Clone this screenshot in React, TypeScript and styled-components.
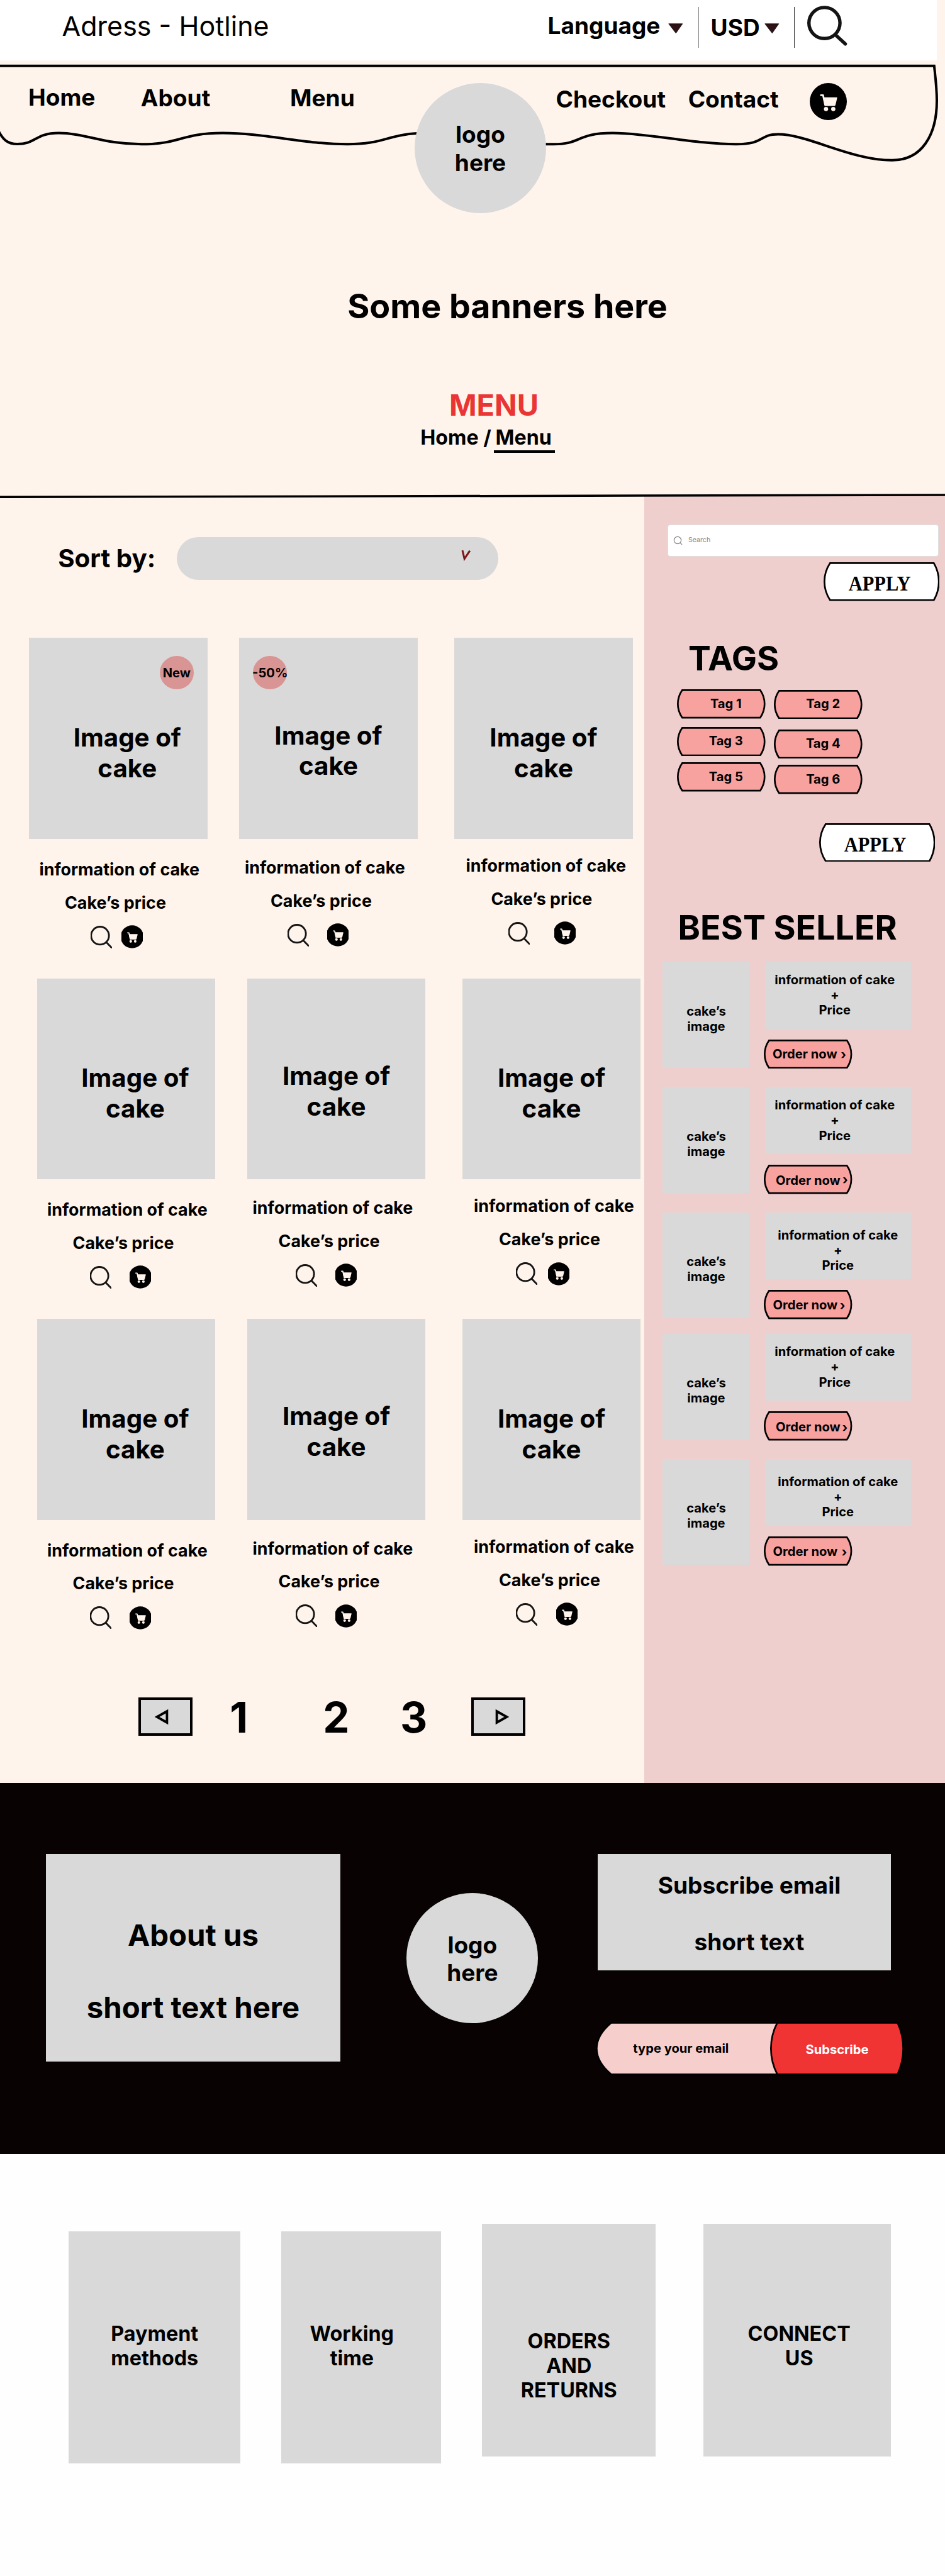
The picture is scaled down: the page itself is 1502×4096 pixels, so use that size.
import React from "react";
import styled, { createGlobalStyle } from "styled-components";

const GlobalStyle = createGlobalStyle`
  *, *::before, *::after { box-sizing: border-box; }
  body { margin: 0; background: #fff; }
  button, input { font: inherit; border: 0; padding: 0; background: none; color: inherit; }
`;

const GREY = "#d9d9d9";
const CREAM = "#fff4eb";
const SERIF = `"Liberation Serif", "Times New Roman", serif`;

const Page = styled.div`
  width: 1502px;
  height: 4096px;
  overflow: hidden;
  background: ${CREAM};
  color: #000;
  font-family: Inter, "Liberation Sans", sans-serif;
  font-weight: 700;
  line-height: 1.21;
  white-space: nowrap;
`;

/* ---------- icons ---------- */

const Svg = styled.svg<{ $top?: number }>`
  display: block;
  flex: none;
  margin-top: ${(p) => p.$top ?? 0}px;
`;

const SearchLarge = () => (
  <Svg width="64" height="64" viewBox="0 0 64 64" $top={9} fill="none" stroke="#141414">
    <circle cx="27.4" cy="27.6" r="24.7" strokeWidth="5.4" />
    <path d="M45 46.5 60.5 60.8" strokeWidth="5.4" strokeLinecap="round" />
  </Svg>
);

const SearchSmall = () => (
  <Svg width="34" height="36" viewBox="0 0 34 36" fill="none" stroke="#141414" strokeWidth="2.8">
    <circle cx="15" cy="15.7" r="14.2" />
    <path d="M25 26.2 35 36.6" />
  </Svg>
);

const CartGlyph = () => (
  <g fill="#fff4eb">
    <path
      d="M17.8 19.4H21.2L24.6 35"
      fill="none"
      stroke="#fff4eb"
      strokeWidth="2.8"
      strokeLinecap="round"
      strokeLinejoin="round"
    />
    <path d="M20.8 22.8H43q.8 0 .6.9L41 34.8q-.4 1.8-1.8 1.8H24z" />
    <circle cx="25.9" cy="41.3" r="3.4" />
    <circle cx="37.4" cy="41.3" r="3.4" />
  </g>
);

const CartLarge = () => (
  <Svg width="59" height="59" viewBox="0 0 59 59" $top={35.5}>
    <circle cx="29.5" cy="29.5" r="29.5" />
    <CartGlyph />
  </Svg>
);

const CartSmall = () => (
  <Svg width="34" height="37" viewBox="2 0 55 59">
    <circle cx="29.5" cy="29.5" r="29.5" />
    <CartGlyph />
  </Svg>
);

const Caret = () => (
  <Svg width="24" height="17" viewBox="0 0 24 17" $top={37}>
    <path d="M.8.8H22.8L12.3 15.8z" fill="#2e1215" stroke="#100406" strokeWidth=".8" />
  </Svg>
);

/* ---------- barrel-shaped outline shared by the tags and buttons ---------- */

const ShapeSvg = styled.svg`
  position: absolute;
  inset: 0;
`;

type BarrelProps = {
  w: number;
  h: number;
  left: number;
  right: number;
  fill: string;
};

const Barrel = ({ w, h, left, right, fill }: BarrelProps) => {
  const s = 1.35;
  const ctrl = (inset: number) => (s - 0.25 * (inset + s)) / 0.75;
  const l = left + s;
  const r = w - right - s;
  const cl = ctrl(left);
  const cr = w - ctrl(right);
  const y1 = h * 0.32;
  const y2 = h * 0.68;
  const d = `M${l} ${s}H${r}C${cr} ${y1} ${cr} ${y2} ${r} ${h - s}H${l}C${cl} ${y2} ${cl} ${y1} ${l} ${s}Z`;
  return (
    <ShapeSvg width={w} height={h} viewBox={`0 0 ${w} ${h}`}>
      <path d={d} fill={fill} stroke="#000" strokeWidth="2.7" />
    </ShapeSvg>
  );
};

const BarrelLabel = styled.span`
  position: relative;
`;

/* ---------- header ---------- */

const TopBar = styled.div`
  display: grid;
  grid-template-columns: 772px 191.5px 47.5px 20px 85px 47.5px 20.5px auto;
  align-items: start;
  width: 1489px;
  height: 96px;
  padding-left: 98.6px;
  background: #fff;
`;

const Address = styled.span`
  margin-top: 15.3px;
  font-size: 43px;
  font-weight: 400;
`;

const BarLabel = styled.span<{ $top: number }>`
  margin-top: ${(p) => p.$top}px;
  font-size: 37px;
`;

const Separator = styled.i<{ $color: string }>`
  width: 1px;
  height: 65px;
  margin-top: 11px;
  background: ${(p) => p.$color};
`;

const Header = styled.header`
  position: relative;
  height: 692px;
`;

const NavOutline = styled.svg`
  position: absolute;
  top: 0;
  left: 0;
`;

const Nav = styled.nav`
  position: relative;
  display: grid;
  grid-template-columns: 178.8px 237.2px 198px 224.5px 210.2px 192.9px auto;
  align-items: start;
  height: 243px;
  padding-left: 45px;
`;

const NavLink = styled.a<{ $top: number }>`
  margin-top: ${(p) => p.$top}px;
  font-size: 37.1px;
`;

const Logo = styled.div<{ $top: number }>`
  width: 209px;
  height: 207px;
  margin-top: ${(p) => p.$top}px;
  padding-top: 60.6px;
  border-radius: 50%;
  background: ${GREY};
  font-size: 37px;
  text-align: center;
  white-space: pre-line;
`;

const BannerTitle = styled.h1`
  margin: 0;
  padding: 115.7px 0 0 111px;
  font-size: 53.7px;
  text-align: center;
`;

const PageTitle = styled.h2`
  margin: 0;
  padding: 96.2px 0 0 68px;
  color: #ea3535;
  font-size: 46.9px;
  text-align: center;
`;

const Breadcrumb = styled.div`
  display: flex;
  margin-top: 4.4px;
  padding-left: 668.3px;
  font-size: 32.2px;
`;

const CrumbHome = styled.span`
  width: 116.4px;
`;

const CrumbCurrent = styled.span`
  width: 97px;
  padding-left: 2.9px;
  border-bottom: 4px solid #000;
`;

/* ---------- catalogue ---------- */

const Main = styled.main`
  position: relative;
  display: grid;
  grid-template-columns: 1024px 478px;
  height: 2047px;
`;

const SectionRule = styled.svg`
  position: absolute;
  top: -4px;
  left: 0;
`;

const Catalogue = styled.section`
  padding-top: 66.2px;
`;

const SortRow = styled.div`
  display: flex;
  align-items: center;
  padding-left: 92.2px;
  font-size: 40.3px;
`;

const SortLabel = styled.span`
  width: 188.8px;
  padding-top: 1.6px;
`;

const SortSelect = styled.div`
  display: flex;
  justify-content: flex-end;
  width: 511px;
  height: 67.6px;
  padding: 20px 43px 0 0;
  border-radius: 34px;
  background: ${GREY};
`;

const ProductRow = styled.div<{ $left: number }>`
  display: grid;
  grid-template-columns: 334px 342px 284px;
  height: 541.4px;
  padding-left: ${(p) => p.$left}px;
`;

const ProductGrid = styled.div`
  padding-top: 92.6px;
`;

const Product = styled.article`
  width: 283.6px;
`;

const ProductImage = styled.div<{ $top: number; $shift: number }>`
  position: relative;
  height: 319.6px;
  padding: ${(p) => p.$top}px 0 0 ${(p) => p.$shift}px;
  background: ${GREY};
  font-size: 40.3px;
  text-align: center;
  white-space: pre-line;
`;

const Badge = styled.span<{ $left: number }>`
  position: absolute;
  top: 28.6px;
  left: ${(p) => p.$left}px;
  width: 54px;
  height: 53.5px;
  border-radius: 50%;
  background: #d99593;
  font-size: 20.15px;
  line-height: 54px;
  display: flex;
  justify-content: center;
`;

const ProductInfo = styled.p<{ $top: number; $left: number }>`
  margin: ${(p) => p.$top}px 0 0 ${(p) => p.$left}px;
  font-size: 26.87px;
`;

const Actions = styled.div<{ $left: number; $gap: number }>`
  display: flex;
  gap: ${(p) => p.$gap}px;
  margin-top: 20px;
  padding-left: ${(p) => p.$left}px;
`;

const IconButton = styled.button`
  display: block;
`;

const Pagination = styled.nav`
  display: grid;
  grid-template-columns: 145.3px 148px 122.7px 113.2px auto;
  align-items: start;
  padding: 51.5px 0 0 219.9px;
`;

const PageNumber = styled.a`
  font-size: 67.2px;
`;

const PageStep = styled.button<{ $pad: number }>`
  width: 86px;
  height: 61px;
  margin-top: 9px;
  padding-left: ${(p) => p.$pad}px;
  border: 4px solid #000;
  background: ${GREY};
`;

/* ---------- sidebar ---------- */

const Sidebar = styled.aside`
  padding: 46.2px 0 0 37px;
  background: #eecfce;
`;

const SearchBox = styled.label`
  display: flex;
  align-items: center;
  gap: 9px;
  width: 430.6px;
  height: 51px;
  padding-left: 8px;
  border: 1px solid #e0e0e0;
  border-radius: 4px;
  background: #fff;
  color: #828282;
  font-size: 10.6px;
  font-weight: 400;
`;

const ApplyButton = styled.button<{ $top: number; $left: number }>`
  position: relative;
  display: block;
  width: 184.6px;
  height: 61.6px;
  margin: ${(p) => p.$top}px 0 0 ${(p) => p.$left}px;
  padding: 6px 6px 0 0;
  font-family: ${SERIF};
  font-size: 34px;
  font-weight: 700;
  line-height: 1;
`;

const ApplyLabel = styled.span`
  position: relative;
  display: inline-block;
  transform: scaleX(0.895);
`;

const SideTitle = styled.h3<{ $top: number; $left: number }>`
  margin: ${(p) => p.$top}px 0 0 ${(p) => p.$left}px;
  font-size: 53.7px;
`;

const Tags = styled.div`
  display: flex;
  gap: 13.9px;
  height: 167px;
  margin: 16.6px 0 0 15px;
`;

const TagColumn = styled.div<{ $top: number; $gap: number }>`
  padding-top: ${(p) => p.$top}px;
  & > :nth-child(2) {
    margin: ${(p) => p.$gap}px 0 10px;
  }
`;

const Tag = styled.button`
  position: relative;
  display: block;
  width: 140.6px;
  height: 46.5px;
  padding: 0 0 1px 15px;
  font-size: 20.15px;
`;

const Seller = styled.article<{ $height: number }>`
  display: grid;
  grid-template-columns: 161.3px auto;
  height: ${(p) => p.$height}px;
  margin-left: -8px;
  font-size: 20.15px;
`;

const SellerList = styled.div`
  padding-top: 20.8px;
`;

const SellerImage = styled.div`
  width: 138px;
  height: 168.4px;
  padding: 66.4px 0 0 1px;
  background: ${GREY};
  text-align: center;
  white-space: pre-line;
`;

const SellerInfo = styled.div<{ $top: number; $shift: number }>`
  width: 233.3px;
  height: 106.7px;
  margin-left: 1.4px;
  padding: ${(p) => p.$top}px ${(p) => p.$shift}px 0 0;
  background: ${GREY};
  text-align: center;
  white-space: pre-line;
`;

const OrderButton = styled.button<{ $top: number; $left: number }>`
  position: relative;
  display: flex;
  align-items: flex-start;
  width: 140.4px;
  height: 46.4px;
  margin-top: 17.2px;
  padding: ${(p) => p.$top}px 0 0 ${(p) => p.$left}px;
`;

const Chevron = styled.span<{ $left: number; $top: number }>`
  position: relative;
  margin: ${(p) => p.$top}px 0 0 ${(p) => p.$left}px;
`;

/* ---------- footer ---------- */

const Footer = styled.footer`
  display: flex;
  align-items: flex-start;
  height: 590px;
  padding: 112.6px 0 0 72.8px;
  background: #080202;
`;

const AboutBox = styled.div`
  width: 468.4px;
  height: 330.7px;
  margin-right: 105.1px;
  padding-top: 100.8px;
  background: ${GREY};
  font-size: 47.3px;
  text-align: center;
  white-space: pre-line;
`;

const Newsletter = styled.div`
  margin-left: 94.9px;
`;

const NewsletterBox = styled.div`
  width: 465.6px;
  height: 185.8px;
  padding: 28.2px 0 0 16px;
  background: ${GREY};
  font-size: 37.1px;
  text-align: center;
  white-space: pre-line;
`;

const EmailForm = styled.div`
  display: flex;
  height: 84.6px;
  margin: 82px 0 0 -3.2px;
  font-size: 20.15px;
`;

const EmailField = styled.div`
  position: relative;
  width: 277px;
  padding: 29.9px 0 0 59.3px;
`;

const SubscribeButton = styled.button`
  position: relative;
  width: 213px;
  padding-top: 2px;
  color: #fff;
`;

const Links = styled.section`
  display: flex;
  align-items: flex-start;
  height: 671px;
  padding-left: 109.2px;
  background: #fefefe;
`;

const LinkBox = styled.div<{ $x: number; $y: number; $w: number; $pad: string }>`
  width: ${(p) => p.$w}px;
  height: 369.4px;
  margin: ${(p) => p.$y}px 0 0 ${(p) => p.$x}px;
  padding: ${(p) => p.$pad};
  background: ${GREY};
  font-size: 32.3px;
  text-align: center;
  white-space: pre-line;
`;

/* ---------- data ---------- */

type Item = {
  label?: string;
  badgeLeft?: number;
  col: 0 | 1 | 2;
  search: number;
  gap: number;
};

const columns = [
  { imgTop: 134.6, shift: 28.6, info: 16.2, infoTop: 31.8, price: 56.8 },
  { imgTop: 131.2, shift: 0, info: 8.8, infoTop: 28.8, price: 49.8 },
  { imgTop: 134.6, shift: 0, info: 18.2, infoTop: 26, price: 58.2 },
];

const rows: { left: number; items: Item[] }[] = [
  {
    left: 46.2,
    items: [
      { label: "New", badgeLeft: 207.6, col: 0, search: 98.3, gap: 15 },
      { label: "-50%", badgeLeft: 22, col: 1, search: 76.5, gap: 29.8 },
      { col: 2, search: 85.6, gap: 39 },
    ],
  },
  {
    left: 58.8,
    items: [
      { col: 0, search: 84.2, gap: 29.5 },
      { col: 1, search: 76.8, gap: 29.5 },
      { col: 2, search: 85.6, gap: 16.8 },
    ],
  },
  {
    left: 58.8,
    items: [
      { col: 0, search: 84.2, gap: 29.5 },
      { col: 1, search: 76.8, gap: 29.5 },
      { col: 2, search: 85.6, gap: 29.5 },
    ],
  },
];

const sellers = [
  { height: 199.2, top: 16.4, shift: 11.2, x: 13.6, y: 10.6, cx: 5.6, cy: 1.8 },
  { height: 199.2, top: 16.4, shift: 11.2, x: 18.7, y: 13, cx: 3.4, cy: -1.6 },
  { height: 192.8, top: 24, shift: 1.2, x: 14.3, y: 11.8, cx: 3.6, cy: 0.8 },
  { height: 199.2, top: 16.4, shift: 11.2, x: 18.7, y: 13, cx: 2.8, cy: 0.5 },
  { height: 168.4, top: 24, shift: 1.2, x: 14.3, y: 11.8, cx: 6.2, cy: 1 },
];

const TagButton = ({ name }: { name: string }) => (
  <Tag>
    <Barrel w={140.6} h={46.5} left={7} right={7} fill="#f8a2a0" />
    <BarrelLabel>{name}</BarrelLabel>
  </Tag>
);

const Apply = ({ top, left }: { top: number; left: number }) => (
  <ApplyButton $top={top} $left={left}>
    <Barrel w={184.6} h={61.6} left={9} right={8} fill="#fff" />
    <ApplyLabel>APPLY</ApplyLabel>
  </ApplyButton>
);

export default function App() {
  return (
    <Page>
      <GlobalStyle />
      <TopBar>
        <Address>Adress - Hotline</Address>
        <BarLabel $top={18.7}>Language</BarLabel>
        <Caret />
        <Separator $color="#808080" />
        <BarLabel $top={22.1}>USD</BarLabel>
        <Caret />
        <Separator $color="#333" />
        <SearchLarge />
      </TopBar>

      <Header>
        <NavOutline width="1502" height="180" viewBox="0 96 1502 180" fill="none" stroke="#000" strokeWidth="4">
          <path d="M-4 104.8H1484.8C1487 125 1489 140 1489 160C1489 215 1465 254.8 1418 254.8C1352 254.8 1284 213.5 1237 213.5C1205 213.5 1217 229.3 1170 229.3C1105 229.3 1030 211.6 973.7 211.6C915 211.6 925 229.3 880 229.3L868 229.3C790 229.3 730 211.6 680 211.6C615 211.6 615 229.3 552 229.3C485 229.3 420 211.6 354 211.6C287 211.6 287 229.3 225 229.3C165 229.3 135 211.6 93.4 211.6C55 211.6 58 229 27.3 229C12 229 5 222 -2 209" />
        </NavOutline>
        <Nav>
          <NavLink $top={37}>Home</NavLink>
          <NavLink $top={38.4}>About</NavLink>
          <NavLink $top={38.4}>Menu</NavLink>
          <Logo $top={35.5}>{"logo\nhere"}</Logo>
          <NavLink $top={39.6}>Checkout</NavLink>
          <NavLink $top={39.6}>Contact</NavLink>
          <CartLarge />
        </Nav>
        <BannerTitle>Some banners here</BannerTitle>
        <PageTitle>MENU</PageTitle>
        <Breadcrumb>
          <CrumbHome>Home /</CrumbHome>
          <CrumbCurrent>Menu</CrumbCurrent>
        </Breadcrumb>
      </Header>

      <Main>
        <Catalogue>
          <SortRow>
            <SortLabel>Sort by:</SortLabel>
            <SortSelect>
              <Svg width="16" height="20" viewBox="0 0 16 20" fill="none" stroke="#7d1416" strokeWidth="3">
                <path d="M2 1.2 5.2 14.5 13.8 1.6" />
              </Svg>
            </SortSelect>
          </SortRow>

          <ProductGrid>
            {rows.map((row, r) => (
              <ProductRow key={r} $left={row.left}>
                {row.items.map((item) => {
                  const c = columns[item.col];
                  return (
                    <Product key={item.col}>
                      <ProductImage $top={c.imgTop} $shift={c.shift}>
                        {item.label && <Badge $left={item.badgeLeft ?? 0}>{item.label}</Badge>}
                        {"Image of\ncake"}
                      </ProductImage>
                      <ProductInfo $top={c.infoTop} $left={c.info}>
                        information of cake
                      </ProductInfo>
                      <ProductInfo $top={20.3} $left={c.price}>
                        Cake’s price
                      </ProductInfo>
                      <Actions $left={item.search} $gap={item.gap}>
                        <IconButton>
                          <SearchSmall />
                        </IconButton>
                        <IconButton>
                          <CartSmall />
                        </IconButton>
                      </Actions>
                    </Product>
                  );
                })}
              </ProductRow>
            ))}
          </ProductGrid>

          <Pagination>
            <PageStep $pad={21}>
              <Svg width="24" height="26" viewBox="0 0 24 26" fill="none" stroke="#000" strokeWidth="3.8">
                <path d="M4.6 13 20.4 4.1V21.9z" />
              </Svg>
            </PageStep>
            <PageNumber>1</PageNumber>
            <PageNumber>2</PageNumber>
            <PageNumber>3</PageNumber>
            <PageStep $pad={33}>
              <Svg width="24" height="26" viewBox="0 0 24 26" fill="none" stroke="#000" strokeWidth="3.8">
                <path d="M19.4 13 3.6 4.1V21.9z" />
              </Svg>
            </PageStep>
          </Pagination>
        </Catalogue>

        <Sidebar>
          <SearchBox>
            <Svg width="15" height="15" viewBox="0 0 15 15" fill="none" stroke="#828282" strokeWidth="1.2">
              <circle cx="7" cy="7" r="5.6" />
              <path d="M11 11 14.2 14.2" />
            </Svg>
            Search
          </SearchBox>
          <Apply top={9} left={247.7} />
          <SideTitle $top={58.8} $left={32.9}>
            TAGS
          </SideTitle>
          <Tags>
            <TagColumn $top={0} $gap={13}>
              <TagButton name="Tag 1" />
              <TagButton name="Tag 3" />
              <TagButton name="Tag 5" />
            </TagColumn>
            <TagColumn $top={0.5} $gap={16.6}>
              <TagButton name="Tag 2" />
              <TagButton name="Tag 4" />
              <TagButton name="Tag 6" />
            </TagColumn>
          </Tags>
          <Apply top={45.7} left={240.8} />
          <SideTitle $top={73} $left={16.6}>
            BEST SELLER
          </SideTitle>
          <SellerList>
            {sellers.map((s, i) => (
              <Seller key={i} $height={s.height}>
                <SellerImage>{"cake’s\nimage"}</SellerImage>
                <div>
                  <SellerInfo $top={s.top} $shift={s.shift}>
                    {"information of cake\n+\nPrice"}
                  </SellerInfo>
                  <OrderButton $top={s.y} $left={s.x}>
                    <Barrel w={140.4} h={46.4} left={7} right={7} fill="#f8a2a0" />
                    <BarrelLabel>Order now</BarrelLabel>
                    <Chevron $left={s.cx} $top={s.cy}>
                      ›
                    </Chevron>
                  </OrderButton>
                </div>
              </Seller>
            ))}
          </SellerList>
        </Sidebar>

        <SectionRule width="1502" height="10" viewBox="0 784 1502 10">
          <path d="M0 790.2 1502 787.1" stroke="#000" strokeWidth="3.5" />
        </SectionRule>
      </Main>

      <Footer>
        <AboutBox>{"About us\n\nshort text here"}</AboutBox>
        <Logo $top={62.4}>{"logo\nhere"}</Logo>
        <Newsletter>
          <NewsletterBox>{"Subscribe email\n\nshort text"}</NewsletterBox>
          <EmailForm>
            <EmailField>
              <Barrel w={296} h={84.6} left={23} right={0} fill="#f6cfcd" />
              <BarrelLabel>type your email</BarrelLabel>
            </EmailField>
            <SubscribeButton>
              <Barrel w={213} h={84.6} left={10} right={9} fill="#f03333" />
              <BarrelLabel>Subscribe</BarrelLabel>
            </SubscribeButton>
          </EmailForm>
        </Newsletter>
      </Footer>

      <Links>
        <LinkBox $x={0} $y={123} $w={273} $pad="142.7px 0 0">
          {"Payment\nmethods"}
        </LinkBox>
        <LinkBox $x={65.1} $y={123} $w={254} $pad="142.7px 30px 0 0">
          {"Working\ntime"}
        </LinkBox>
        <LinkBox $x={65.1} $y={111.4} $w={275.8} $pad="166.2px 0 0">
          {"ORDERS\nAND\nRETURNS"}
        </LinkBox>
        <LinkBox $x={75.7} $y={111.4} $w={298} $pad="154.3px 0 0 6.6px">
          {"CONNECT\nUS"}
        </LinkBox>
      </Links>
    </Page>
  );
}
